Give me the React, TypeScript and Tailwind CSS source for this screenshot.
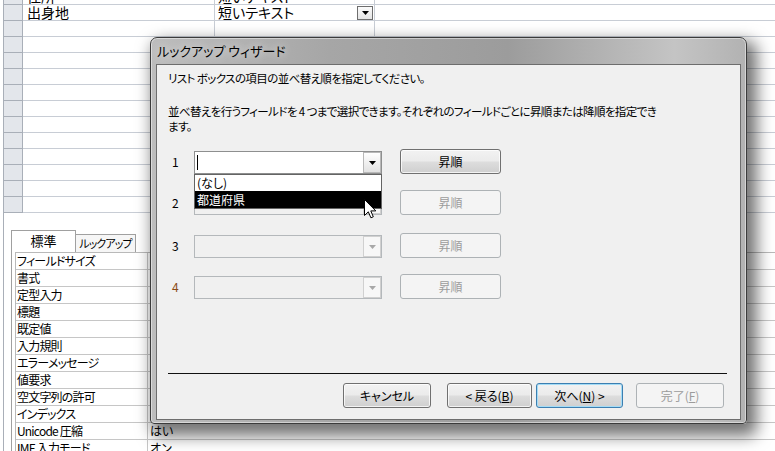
import React from 'react'

type SheetRow = [string, string, boolean]

const SHEET_ROWS: SheetRow[] = [
  ['住所', '短いテキスト', false],
  ['出身地', '短いテキスト', true],
  ...Array.from({ length: 12 }, (): SheetRow => ['', '', false]),
]

const PROPS: [string, string][] = [
  ['フィールドサイズ', ''],
  ['書式', ''],
  ['定型入力', ''],
  ['標題', ''],
  ['既定値', ''],
  ['入力規則', ''],
  ['エラーメッセージ', ''],
  ['値要求', ''],
  ['空文字列の許可', ''],
  ['インデックス', ''],
  ['Unicode 圧縮', 'はい'],
  ['IME 入力モード', 'オン'],
]

function DownArrow({ color = '#000' }: { color?: string }) {
  return (
    <svg width="7" height="4" viewBox="0 0 7 4">
      <path d="M0 0h7L3.5 4z" fill={color} />
    </svg>
  )
}

type BtnKind = 'normal' | 'default' | 'disabled'

function WinButton({
  kind = 'normal',
  width,
  children,
}: {
  kind?: BtnKind
  width: string
  children: React.ReactNode
}) {
  const base =
    'h-[25px] shrink-0 rounded-[3px] border flex items-center justify-center whitespace-nowrap text-[12px] leading-[14px]'
  const styles: Record<BtnKind, string> = {
    normal:
      'border-[#707070] text-black bg-[linear-gradient(180deg,#f2f2f2_0%,#ebebeb_48%,#dddddd_52%,#cfcfcf_100%)] shadow-[inset_0_0_0_1px_rgba(255,255,255,0.75)]',
    default:
      'border-[#3c7fb1] text-black bg-[linear-gradient(180deg,#f2f2f2_0%,#ebebeb_48%,#dddddd_52%,#cfcfcf_100%)] shadow-[inset_0_0_0_1px_#a4dcf6]',
    disabled: 'border-[#adb2b5] text-[#9c9c9c] bg-[#f4f4f4]',
  }
  return <div className={`${base} ${styles[kind]} ${width}`}>{children}</div>
}

function Combo({ active }: { active?: boolean }) {
  if (active) {
    return (
      <div className="relative w-[188px] h-[23px] shrink-0 border border-[#8e8f8f] bg-white">
        <div className="absolute left-[2px] top-[3px] w-[1px] h-[15px] bg-black" />
        <div className="absolute right-[0px] top-[0px] bottom-[0px] w-[18px] border border-[#b8b8b8] bg-[linear-gradient(180deg,#ffffff_0%,#f0f0f0_50%,#e2e2e2_100%)] flex items-center justify-center">
          <DownArrow />
        </div>
        {/* open list */}
        <div className="absolute left-[-1px] top-[22px] w-[188px] h-[35px] border border-[#646464] bg-white z-10 flex flex-col">
          <div className="h-[16px] pl-[2px] text-[12px] leading-[16px]">(なし)</div>
          <div className="h-[17px] pl-[2px] bg-black text-white text-[12px] leading-[17px]">都道府県</div>
        </div>
      </div>
    )
  }
  return (
    <div className="relative w-[188px] h-[23px] shrink-0 border border-[#b4b8bb] bg-[#f0f0f0]">
      <div className="absolute right-[0px] top-[0px] bottom-[0px] w-[18px] border border-[#d0d0d0] bg-[#f7f7f7] flex items-center justify-center">
        <DownArrow color="#a8a8a8" />
      </div>
    </div>
  )
}

function SortRow({
  label,
  labelColor = 'text-black',
  active,
  mt,
}: {
  label: string
  labelColor?: string
  active?: boolean
  mt: string
}) {
  return (
    <div className={`flex items-end h-[25px] ${mt}`}>
      <div className={`w-[22px] shrink-0 self-center text-[12px] leading-[14px] ${labelColor}`}>{label}</div>
      <Combo active={active} />
      <div className="ml-[18px]">
        <WinButton kind={active ? 'normal' : 'disabled'} width="w-[101px]">
          昇順
        </WinButton>
      </div>
    </div>
  )
}

function Cursor() {
  return (
    <svg className="absolute left-[364px] top-[199px] z-20" width="13" height="20" viewBox="0 0 13 20">
      <path
        d="M0.5 0.5 L0.5 16.5 L4.3 12.8 L6.9 18.8 L9.3 17.8 L6.8 11.9 L11.8 11.9 Z"
        fill="#fff"
        stroke="#000"
        strokeWidth="1"
        strokeLinejoin="round"
      />
    </svg>
  )
}

export default function App() {
  return (
    <div className="relative w-[775px] h-[451px] overflow-hidden bg-white text-black [font-family:'Noto_Sans_CJK_JP',sans-serif] [font-feature-settings:'palt']">
      {/* Datasheet (table design view) */}
      <div className="-mt-[11px]">
        {SHEET_ROWS.map(([name, type, hasDrop], i) => (
          <div key={i} className="flex h-[16px]">
            <div className="w-[3px] shrink-0" />
            <div className="w-[20px] shrink-0 border-l border-r border-b border-[#a9afb8] bg-[#e3e6eb]" />
            <div className="w-[192px] shrink-0 border-r border-b border-[#c8cdd5] pl-[4px] text-[14px] leading-[15px]">
              {name}
            </div>
            <div className="w-[160px] shrink-0 flex items-center border-r border-b border-[#c8cdd5] pl-[3px] text-[14px] leading-[15px]">
              <span>{type}</span>
              {hasDrop && (
                <div className="ml-auto mr-[1px] w-[16px] h-[14px] border border-[#6e6e6e] bg-[linear-gradient(180deg,#fbfbfb,#e4e4e4)] flex items-center justify-center">
                  <DownArrow />
                </div>
              )}
            </div>
            <div className="flex-1 border-b border-[#c8cdd5]" />
          </div>
        ))}
      </div>

      {/* Field properties */}
      <div className="flex h-[238px]">
        <div className="w-[3px] shrink-0" />
        <div className="flex-1 border-l border-[#a9afb8] pl-[7px] pt-[17px]">
          <div className="flex items-end h-[22px]">
            <div className="w-[65px] h-[22px] border border-b-0 border-[#a0a0a0] bg-white text-center text-[13px] leading-[20px]">
              標準
            </div>
            <div className="w-[60px] h-[18px] border border-l-0 border-b-0 border-[#a0a0a0] bg-[#f6f6f6] text-center whitespace-nowrap overflow-hidden text-[11px] leading-[17px] tracking-[-0.9px]">
              ルックアップ
            </div>
          </div>
          <div className="border-l border-[#a0a0a0] pl-[3px]">
            <div className="border-l border-t border-[#b9b9b9]">
              {PROPS.map(([label, value]) => (
                <div key={label} className="flex h-[17px] border-b border-[#c6c6c6]">
                  <div className="w-[132px] shrink-0 border-r border-[#c6c6c6] pl-[1px] whitespace-nowrap text-[12px] leading-[16px] tracking-[-0.8px]">
                    {label}
                  </div>
                  <div className="flex-1 pl-[2px] text-[12px] leading-[16px]">{value}</div>
                </div>
              ))}
            </div>
          </div>
        </div>
      </div>

      {/* Lookup wizard dialog */}
      <div className="absolute left-[150px] top-[37px] w-[597px] h-[387px] flex flex-col rounded-t-[7px] rounded-b-[4px] border border-[#3b3b3b] bg-[linear-gradient(90deg,#bdbdbd_0%,#a6a6a6_30%,#9c9c9c_60%,#c4c4c4_88%,#b2b2b2_100%)] shadow-[6px_8px_16px_4px_rgba(0,0,0,0.55),inset_0_0_0_1px_rgba(255,255,255,0.45)]">
        <div className="h-[26px] shrink-0 flex items-center pl-[6px] text-[13px] leading-[16px] text-black [text-shadow:0_0_8px_rgba(255,255,255,0.9)]">
          ルックアップ ウィザード
        </div>
        <div className="mx-[5px] h-[356px] shrink-0 border border-[#6d6d6d] bg-[#f0f0f0] flex flex-col">
          <div className="pl-[11px] pt-[6px] whitespace-nowrap text-[11.5px] leading-[14px] tracking-[-0.6px]">
            リスト ボックスの項目の並べ替え順を指定してください。
          </div>
          <div className="pl-[11px] mt-[19px] whitespace-nowrap text-[11.5px] leading-[15px] tracking-[-0.6px]">
            並べ替えを行うフィールドを 4 つまで選択できます。それぞれのフィールドごとに昇順または降順を指定でき
            <br />
            ます。
          </div>

          <div className="pl-[15px]">
            <SortRow label="1" active mt="mt-[15px]" />
            <SortRow label="2" mt="mt-[16px]" />
            <SortRow label="3" mt="mt-[18px]" />
            <SortRow label="4" labelColor="text-[#8a4a14]" mt="mt-[16px]" />
          </div>

          <div className="mt-auto pb-[11px]">
            <div className="ml-[11px] w-[559px] h-[1px] bg-[#111]" />
            <div className="mt-[9px] flex justify-end pr-[16px]">
              <WinButton width="w-[88px]">キャンセル</WinButton>
              <div className="ml-[16px]">
                <WinButton width="w-[85px]">
                  &lt; 戻る(<span className="underline">B</span>)
                </WinButton>
              </div>
              <div className="ml-[4px]">
                <WinButton kind="default" width="w-[87px]">
                  次へ(<span className="underline">N</span>) &gt;
                </WinButton>
              </div>
              <div className="ml-[13px]">
                <WinButton kind="disabled" width="w-[88px]">
                  完了(<span className="underline">F</span>)
                </WinButton>
              </div>
            </div>
          </div>
        </div>
      </div>

      <Cursor />
    </div>
  )
}
